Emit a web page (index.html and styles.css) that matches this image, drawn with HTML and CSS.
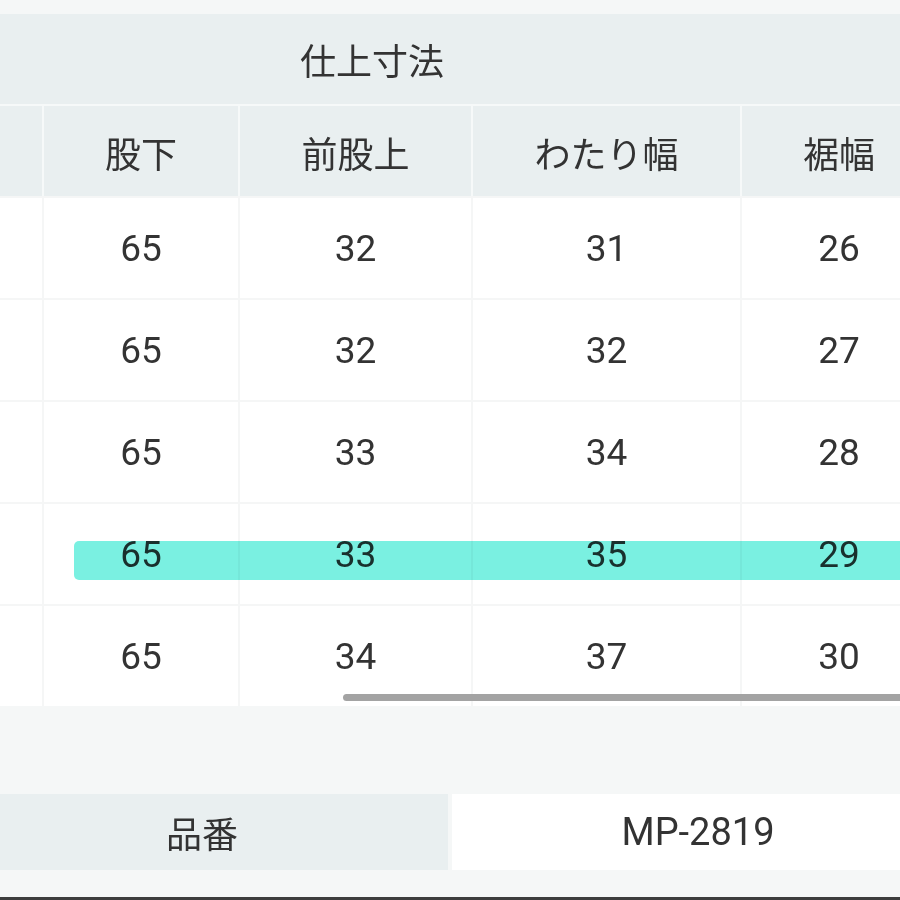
FILE: index.html
```html
<!DOCTYPE html>
<html lang="ja">
<head>
<meta charset="utf-8">
<link rel="stylesheet" href="styles.css">
</head>
<body>
<div class="page">
  <div class="table-wrap">
    <div class="grid">
      <div class="head-top">仕上寸法</div>
      <div class="hc"></div>
      <div class="hc">股下</div>
      <div class="hc">前股上</div>
      <div class="hc">わたり幅</div>
      <div class="hc">裾幅</div>
      <div class="hc"></div>

      <div class="c"></div><div class="c">65</div><div class="c">32</div><div class="c">31</div><div class="c">26</div><div class="c"></div>
      <div class="c"></div><div class="c">65</div><div class="c">32</div><div class="c">32</div><div class="c">27</div><div class="c"></div>
      <div class="c"></div><div class="c">65</div><div class="c">33</div><div class="c">34</div><div class="c">28</div><div class="c"></div>
      <div class="c"></div><div class="c">65</div><div class="c">33</div><div class="c">35</div><div class="c">29</div><div class="c"></div>
      <div class="c"></div><div class="c">65</div><div class="c">34</div><div class="c">37</div><div class="c">30</div><div class="c"></div>
    </div>
    <div class="highlight"></div>
    <div class="scrollbar"></div>
  </div>
  <div class="spacer"></div>
  <div class="info">
    <div class="info-label">品番</div>
    <div class="info-value">MP-2819</div>
  </div>
  <div class="bottom-gap"></div>
  <div class="bottom-line"></div>
</div>
</body>
</html>
```

FILE: styles.css
```css
* { box-sizing: border-box; }
html, body {
  margin: 0;
  padding: 0;
  background: #f5f7f7;
}
body {
  font-family: Roboto, "Noto Sans CJK JP", sans-serif;
  color: #333;
  width: 900px;
  height: 900px;
  overflow: hidden;
}
.page {
  padding-top: 14px;
}
.table-wrap {
  position: relative;
  width: 900px;
  overflow: hidden;
}
.grid {
  display: grid;
  grid-template-columns: 44px 196px 233px 269px 196px 200px;
  width: max-content;
}
.head-top {
  grid-column: 1 / -1;
  height: 92px;
  background: #e9eff0;
  border-bottom: 2px solid #f6f9f9;
  display: flex;
  align-items: center;
  padding-left: 300px;
  font-family: "Noto Sans CJK JP", sans-serif;
  font-size: 36px;
  padding-bottom: 0;
}
.hc {
  height: 90px;
  background: #e9eff0;
  border-right: 2px solid #f6f9f9;
  display: flex;
  align-items: center;
  justify-content: center;
  font-family: "Noto Sans CJK JP", sans-serif;
  font-size: 36px;
  padding-top: 2px;
}
.c {
  height: 102px;
  background: #fff;
  border-top: 2px solid #f5f6f6;
  border-right: 2px solid #f5f6f6;
  display: flex;
  align-items: center;
  justify-content: center;
  font-family: Roboto, sans-serif;
  font-size: 37px;
  padding-bottom: 0;
}
.highlight {
  position: absolute;
  top: 527px;
  left: 74px;
  right: 0;
  height: 39px;
  background: #7af0e1;
  border-radius: 5px 0 0 5px;
  mix-blend-mode: multiply;
  filter: blur(0.7px);
}
.scrollbar {
  position: absolute;
  top: 680px;
  left: 343px;
  right: -10px;
  height: 7px;
  background: #a3a3a3;
  border-radius: 4px;
}
.spacer {
  height: 88px;
}
.info {
  display: grid;
  grid-template-columns: 492px 492px;
  gap: 4px;
  margin-left: -44px;
  width: 988px;
  height: 76px;
}
.info-label, .info-value {
  display: flex;
  align-items: center;
  justify-content: center;
  font-size: 36px;
}
.info-label {
  background: #e9eff0;
  font-family: "Noto Sans CJK JP", sans-serif;
}
.info-value {
  background: #fff;
  font-family: Roboto, sans-serif;
  font-size: 38px;
}
.bottom-gap {
  height: 27px;
}
.bottom-line {
  height: 3px;
  background: #3d3d3d;
}
```
